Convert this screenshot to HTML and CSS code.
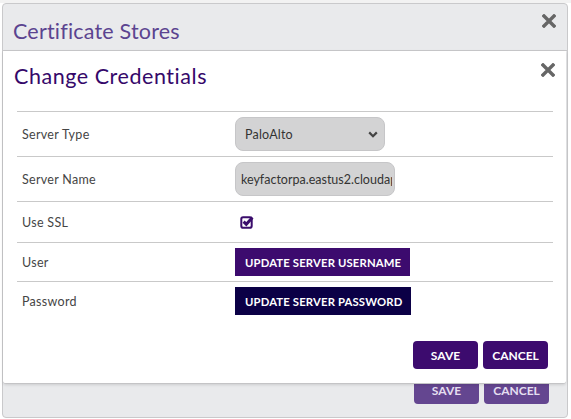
FILE: index.html
```html
<!DOCTYPE html>
<html>
<head>
<meta charset="utf-8">
<link rel="stylesheet" href="styles.css">
</head>
<body>
<div class="page">
  <div class="bgline bgline-top"></div>
  <div class="outer">
    <div class="outer-head">
      <span class="outer-title">Certificate Stores</span>
      <svg class="close" viewBox="0 0 14 14" width="14" height="14"><path d="M2 2 L12 12 M12 2 L2 12" stroke="#666" stroke-width="3.4" stroke-linecap="square"/></svg>
    </div>
    <div class="outer-body"></div>
    <div class="outer-foot">
      <button class="btn btn-dim">SAVE</button>
      <button class="btn btn-dim">CANCEL</button>
    </div>
  </div>

  <div class="inner">
    <div class="inner-head">
      <span class="inner-title">Change Credentials</span>
      <svg class="close" viewBox="0 0 14 14" width="14" height="14"><path d="M2 2 L12 12 M12 2 L2 12" stroke="#666" stroke-width="3.4" stroke-linecap="square"/></svg>
    </div>
    <div class="form">
      <div class="row row-input">
        <div class="label">Server Type</div>
        <div class="ctrl">
          <div class="select">
            <span>PaloAlto</span>
            <svg class="chev" viewBox="0 0 10 7" width="10" height="7"><path d="M1.2 1.4 L5 5.2 L8.8 1.4" fill="none" stroke="#444" stroke-width="2.2"/></svg>
          </div>
        </div>
      </div>
      <div class="row row-input">
        <div class="label">Server Name</div>
        <div class="ctrl">
          <div class="textbox"><span>keyfactorpa.eastus2.cloudapp.azure.com</span></div>
        </div>
      </div>
      <div class="row row-check">
        <div class="label">Use SSL</div>
        <div class="ctrl">
          <svg class="check" viewBox="0 0 14 14" width="14" height="14">
            <rect x="1.3" y="2.3" width="10.4" height="10.4" rx="1.8" fill="none" stroke="#3b0d6c" stroke-width="2"/>
            <path d="M3.6 6.6 L6.3 9.3 L12.4 2.4" fill="none" stroke="#3b0d6c" stroke-width="3"/>
          </svg>
        </div>
      </div>
      <div class="row row-btn">
        <div class="label">User</div>
        <div class="ctrl"><button class="ubtn ubtn-user">UPDATE SERVER USERNAME</button></div>
      </div>
      <div class="row row-btn">
        <div class="label">Password</div>
        <div class="ctrl"><button class="ubtn ubtn-pass">UPDATE SERVER PASSWORD</button></div>
      </div>
    </div>
    <div class="inner-foot">
      <button class="btn">SAVE</button>
      <button class="btn">CANCEL</button>
    </div>
  </div>
</div>
</body>
</html>
```

FILE: styles.css
```css
* { box-sizing: border-box; }
html, body { margin: 0; padding: 0; }
body {
  width: 571px;
  height: 419px;
  overflow: hidden;
  background: #ffffff;
  font-family: "Lato", "Liberation Sans", sans-serif;
}
.page {
  position: relative;
  width: 571px;
  height: 419px;
}
.bgline-top {
  position: absolute;
  left: 0; top: 0;
  width: 571px; height: 3px;
  background: #f2f2f2;
}
.outer {
  position: absolute;
  left: 2px; top: 3px;
  width: 566px; height: 415px;
  background: #e9eaec;
  border: 1px solid #c9c9cb;
  border-radius: 4px;
  display: flex;
  flex-direction: column;
}
.outer-head {
  height: 47px;
  border-bottom: 1px solid #c9c9cb;
  display: flex;
  justify-content: space-between;
  align-items: flex-start;
  padding: 13px 11px 0 10px;
}
.outer-title {
  font-size: 21.5px;
  letter-spacing: 0.2px;
  color: #5b4490;
  line-height: 24px;
  margin-top: 2px;
}
.close { display: block; margin-top: -3px; }
.outer-body { flex: 1; }
.outer-foot {
  display: flex;
  justify-content: flex-end;
  gap: 5px;
  padding: 0 18px 13px 0;
}
.btn {
  width: 65px;
  height: 28px;
  border: none;
  border-radius: 4px;
  background: #3c0b6e;
  color: #fff;
  font-family: "Lato", "Liberation Sans", sans-serif;
  font-weight: 700;
  font-size: 12px;
  padding: 0;
}
.btn-dim { background: #644690; color: #e4dff0; }
.inner {
  position: absolute;
  left: 3px; top: 51px;
  width: 563px; height: 333px;
  background: #fff;
  border-bottom: 1px solid #c4c4c6;
  border-radius: 0 0 3px 3px;
  box-shadow: 0 1px 3px rgba(0,0,0,0.12);
  padding: 0 13px 0 14px;
}
.inner-head {
  height: 60px;
  display: flex;
  justify-content: space-between;
  align-items: flex-start;
  padding-top: 13px;
}
.inner-title {
  font-size: 21.5px;
  letter-spacing: 0.55px;
  color: #35086a;
  line-height: 24px;
  margin-left: -3px;
}
.inner-head .close { margin-right: -2px; margin-top: -1px; }
.form { display: flex; flex-direction: column; }
.row {
  display: flex;
  align-items: center;
  border-top: 1px solid #c9c9c9;
}
.row-input { height: 45px; }
.row-check { height: 41px; }
.row-btn { height: 39px; }
.label {
  width: 218px;
  padding-left: 5px;
  font-size: 12.5px;
  letter-spacing: 0.3px;
  color: #454545;
}
.ctrl { display: flex; align-items: center; }
.select, .textbox {
  height: 34px;
  background: #d3d3d4;
  border: 1px solid #c6c6c8;
  border-radius: 8px;
  display: flex;
  align-items: center;
  font-size: 12.5px;
  color: #333;
}
.select {
  width: 150px;
  padding: 0 6px 0 9px;
  justify-content: space-between;
  letter-spacing: 0.2px;
}
.textbox {
  width: 160px;
  padding: 0 2px 0 5px;
  overflow: hidden;
  white-space: nowrap;
}
.textbox span { display: block; overflow: hidden; }
.check { display: block; margin-left: 5px; }
.ubtn {
  height: 28px;
  border: none;
  border-radius: 0;
  color: #fff;
  font-family: "Lato", "Liberation Sans", sans-serif;
  font-weight: 700;
  font-size: 11.3px;
  letter-spacing: 0.15px;
  padding: 0 0 0 10px;
  text-align: left;
}
.ubtn-user { width: 175px; background: #3c0b6e; }
.ubtn-pass { width: 176px; background: #0b0046; }
.inner-foot {
  display: flex;
  justify-content: flex-end;
  gap: 5px;
  padding: 21px 5px 0 0;
}
```
